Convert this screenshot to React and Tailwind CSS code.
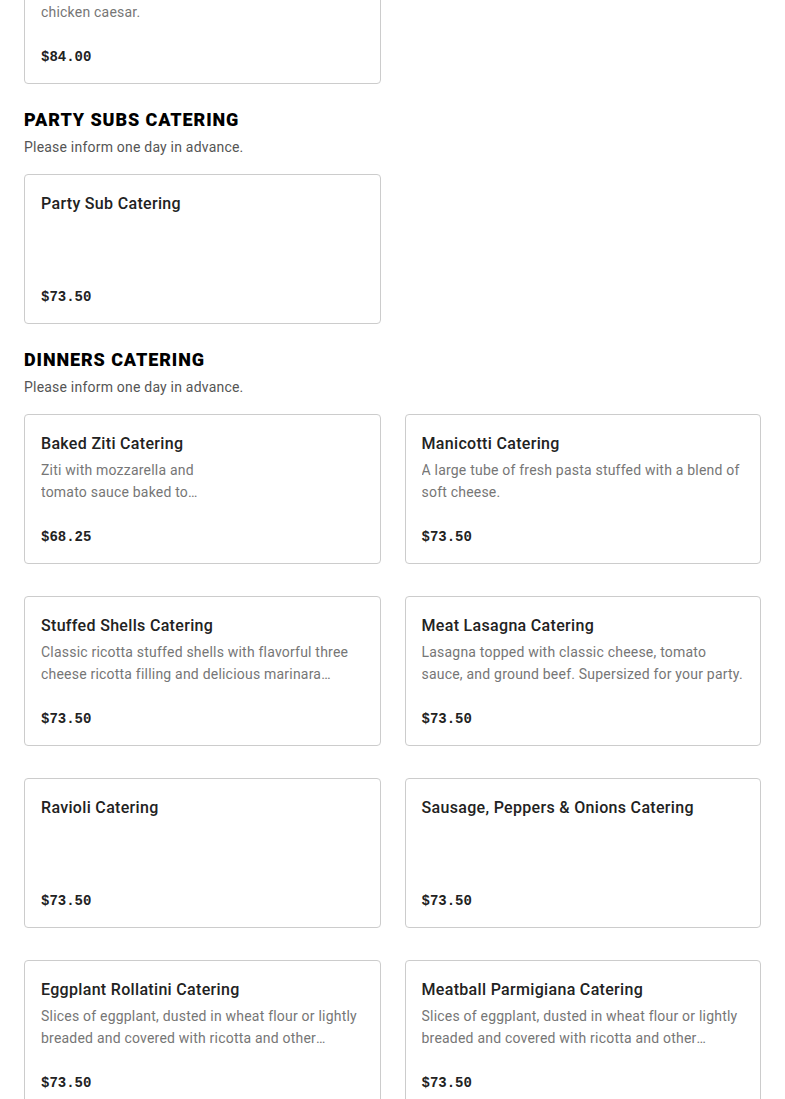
const sections = [
  {
    title: null,
    items: [
      {
        name: "Salad Catering",
        desc: "Garden salad, greek salad, antipasto or grilled\nchicken caesar.",
        price: "$84.00",
      },
    ],
  },
  {
    title: "Party Subs Catering",
    note: "Please inform one day in advance.",
    items: [{ name: "Party Sub Catering", desc: "", price: "$73.50" }],
  },
  {
    title: "Dinners Catering",
    note: "Please inform one day in advance.",
    items: [
      {
        name: "Baked Ziti Catering",
        desc: "Ziti with mozzarella and tomato sauce baked to perfection.",
        price: "$68.25",
        narrow: true,
      },
      {
        name: "Manicotti Catering",
        desc: "A large tube of fresh pasta stuffed with a blend of soft cheese.",
        price: "$73.50",
      },
      {
        name: "Stuffed Shells Catering",
        desc: "Classic ricotta stuffed shells with flavorful three cheese ricotta filling and delicious marinara sauce.",
        price: "$73.50",
      },
      {
        name: "Meat Lasagna Catering",
        desc: "Lasagna topped with classic cheese, tomato sauce, and ground beef. Supersized for your party.",
        price: "$73.50",
      },
      { name: "Ravioli Catering", desc: "", price: "$73.50" },
      { name: "Sausage, Peppers & Onions Catering", desc: "", price: "$73.50" },
      {
        name: "Eggplant Rollatini Catering",
        desc: "Slices of eggplant, dusted in wheat flour or lightly breaded and covered with ricotta and other cheeses.",
        price: "$73.50",
      },
      {
        name: "Meatball Parmigiana Catering",
        desc: "Slices of eggplant, dusted in wheat flour or lightly breaded and covered with ricotta and other cheeses.",
        price: "$73.50",
      },
    ],
  },
]

function Card({ item }) {
  return (
    <div className="flex h-[150px] flex-col rounded border border-[#cccccc] bg-white px-4 pt-[17px] pb-4">
      <div className="text-[16px] leading-6 font-medium tracking-[0.02em] text-[#222222]">{item.name}</div>
      {item.desc && (
        <p
          className={`mt-[3px] line-clamp-2 whitespace-pre-line text-[14px] leading-[22px] tracking-[0.015em] text-[#767676] ${
            item.narrow ? "max-w-[170px]" : ""
          }`}
        >
          {item.desc}
        </p>
      )}
      <div className="mt-auto font-['Liberation_Mono',monospace] text-[14px] leading-5 font-bold text-[#222222]">
        {item.price}
      </div>
    </div>
  )
}

export default function App() {
  return (
    <div className="min-h-screen overflow-hidden bg-white font-['Roboto',sans-serif]">
      <div className="-mt-[66px] px-6 pb-10">
        {sections.map((section, i) => (
          <div key={i}>
            {section.title && (
              <>
                <h2 className="mt-[22px] text-[18px] leading-7 font-black tracking-[0.05em] text-black uppercase">
                  {section.title}
                </h2>
                <p className="mt-[3px] text-[14px] leading-5 tracking-[0.015em] text-[#555555]">{section.note}</p>
              </>
            )}
            <div className={`grid grid-cols-2 gap-x-6 gap-y-8 ${section.title ? "mt-[17px]" : ""}`}>
              {section.items.map((item) => (
                <Card key={item.name} item={item} />
              ))}
            </div>
          </div>
        ))}
      </div>
    </div>
  )
}
